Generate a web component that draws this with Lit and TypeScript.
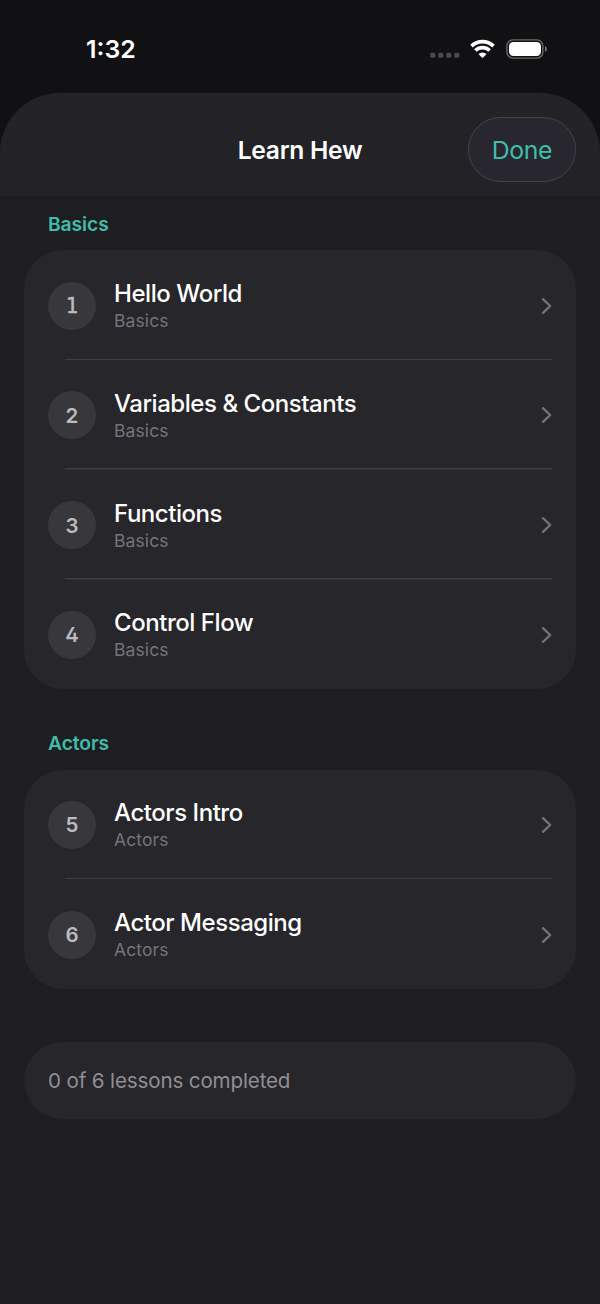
import { LitElement, html, css } from "lit";
import { customElement, property } from "lit/decorators.js";
import { classMap } from "lit/directives/class-map.js";

interface Lesson {
  n: number;
  title: string;
  group: string;
}

const basics: Lesson[] = [
  { n: 1, title: "Hello World", group: "Basics" },
  { n: 2, title: "Variables & Constants", group: "Basics" },
  { n: 3, title: "Functions", group: "Basics" },
  { n: 4, title: "Control Flow", group: "Basics" },
];

const actors: Lesson[] = [
  { n: 5, title: "Actors Intro", group: "Actors" },
  { n: 6, title: "Actor Messaging", group: "Actors" },
];

@customElement("status-bar")
class StatusBar extends LitElement {
  static styles = css`
    :host { display: flex; height: 93px; box-sizing: border-box; padding: 0 53px 0 86px; }
    .bar { display: flex; flex: 1; height: 98px; align-items: center; justify-content: space-between; }
    .time { font-size: 24.8px; font-weight: 600; letter-spacing: 0; color: #fff; line-height: 30px; }
    .icons { display: flex; align-items: center; }
    .dots { margin-right: 10px; margin-top: 12px; }
    .wifi { margin-right: 11px; }
    svg { display: block; }
  `;
  render() {
    return html`
      <div class="bar">
        <div class="time">1:32</div>
        <div class="icons">
          <svg class="dots" width="30" height="6" viewBox="0 0 30 6" fill="#4a4a4c">
            <rect x="0.3" y="0.7" width="5" height="5" rx="1.4" />
            <rect x="8.3" y="0.7" width="5" height="5" rx="1.4" />
            <rect x="16.3" y="0.7" width="5" height="5" rx="1.4" />
            <rect x="24.3" y="0.7" width="5" height="5" rx="1.4" />
          </svg>
          <svg class="wifi" width="25" height="20" viewBox="0 0 25 20">
            <g fill="none" stroke="#fff" stroke-width="3.7">
              <path d="M1.5 7.1A15.9 15.9 0 0 1 23.5 7.1" />
              <path d="M5.4 11.5A10.2 10.2 0 0 1 19.6 11.5" />
            </g>
            <path d="M8.5 15A6 6 0 0 1 16.5 15L13.2 18.5Q12.5 19.1 11.8 18.5Z" fill="#fff" />
          </svg>
          <svg width="41" height="20" viewBox="0 0 41 20">
            <rect x="0.9" y="0.9" width="36" height="18.2" rx="6" fill="none" stroke="#69696b" stroke-width="1.4" />
            <rect x="3" y="3" width="32" height="14" rx="4.4" fill="#fff" />
            <path d="M39 7Q41 8 41 10T39 13Z" fill="#77777a" />
          </svg>
        </div>
      </div>
    `;
  }
}

@customElement("lesson-row")
class LessonRow extends LitElement {
  @property({ type: Object }) lesson!: Lesson;
  @property({ type: Boolean }) last = false;
  static styles = css`
    :host { display: block; height: 109.75px; }
    .row { display: flex; align-items: center; height: 100%; padding: 1px 24px 0; box-sizing: border-box;
      background: linear-gradient(#3d3d42, #3d3d42) 41px 100% / calc(100% - 65px) 1.5px no-repeat; }
    .row.last { background: none; }
    .num { width: 48px; height: 48px; border-radius: 50%; background: #38373c; color: #bbbbc0;
      display: flex; align-items: center; justify-content: center; flex: none;
      font-size: 20.5px; font-weight: 600; font-feature-settings: "cv02"; }
    .num.slab { font-family: "DejaVu Sans Mono", monospace; font-size: 20.5px; font-weight: 400; -webkit-text-stroke: 0.5px #bbbbc0; }
    .text { flex: 1; margin-left: 18px; padding-top: 1px; }
    .title { font-size: 24px; line-height: 30px; font-weight: 500; color: #fff; letter-spacing: -0.45px; }
    .sub { font-size: 17.5px; line-height: 24px; margin-top: 0; color: #757479; letter-spacing: 0.1px; }
    svg { display: block; margin-right: 0.5px; }
  `;
  render() {
    return html`
      <div class=${classMap({ row: true, last: this.last })}>
        <div class=${classMap({ num: true, slab: this.lesson.n === 1 })}>${this.lesson.n}</div>
        <div class="text">
          <div class="title">${this.lesson.title}</div>
          <div class="sub">${this.lesson.group}</div>
        </div>
        <svg width="11" height="18" viewBox="0 0 11 18">
          <path d="M2 2.2L9.2 9L2 15.8" fill="none" stroke="#737277" stroke-width="2.4" stroke-linecap="round" stroke-linejoin="round" />
        </svg>
      </div>
    `;
  }
}

@customElement("lesson-section")
class LessonSection extends LitElement {
  @property() heading = "";
  @property({ type: Array }) lessons: Lesson[] = [];
  static styles = css`
    :host { display: block; }
    .heading { height: 54.3px; padding: 1px 24px 0; box-sizing: border-box; display: flex; align-items: center;
      font-size: 19.3px; font-weight: 600; color: #3fbdab; letter-spacing: -0.1px; }
    .card { background: #27262b; border-radius: 39px; }
  `;
  render() {
    return html`
      <div class="heading">${this.heading}</div>
      <div class="card">
        ${this.lessons.map(
          (l, i) => html`<lesson-row .lesson=${l} .last=${i === this.lessons.length - 1}></lesson-row>`
        )}
      </div>
    `;
  }
}

@customElement("app-root")
class AppRoot extends LitElement {
  static styles = css`
    :host { display: block; height: 1304px; overflow: hidden; background: #111113;
      font-family: Inter, "Liberation Sans", sans-serif; }
    .sheet { height: 1211px; border-radius: 60px 60px 0 0; background: #1e1d21; overflow: hidden; }
    .header { height: 103px; box-sizing: border-box; background: #232227; display: grid;
      grid-template-columns: 1fr auto 1fr; align-items: center; padding: 10px 24px 0; }
    .title { grid-column: 2; font-size: 24.6px; font-weight: 600; color: #fff; letter-spacing: -0.3px; }
    .done { justify-self: end; width: 108px; height: 65px; border-radius: 33px; border: 1px solid #454449;
      box-sizing: border-box; background: #28272f; color: #3fbdab; font-family: inherit;
      font-size: 24.8px; font-weight: 400; padding: 0; letter-spacing: -0.4px; display: flex; align-items: center; justify-content: center; }
    .list { display: flex; flex-direction: column; padding: 0 24px; gap: 26px; }
    .progress { margin-top: 26.5px; height: 77px; border-radius: 39px; background: #27262b; color: #8f8e94;
      display: flex; align-items: center; padding: 0 24px; font-size: 20.6px; letter-spacing: -0.15px; }
  `;
  render() {
    return html`
      <status-bar></status-bar>
      <div class="sheet">
        <div class="header">
          <div class="title">Learn Hew</div>
          <button class="done">Done</button>
        </div>
        <div class="list">
          <lesson-section heading="Basics" .lessons=${basics}></lesson-section>
          <lesson-section heading="Actors" .lessons=${actors}></lesson-section>
          <div class="progress">0 of 6 lessons completed</div>
        </div>
      </div>
    `;
  }
}
